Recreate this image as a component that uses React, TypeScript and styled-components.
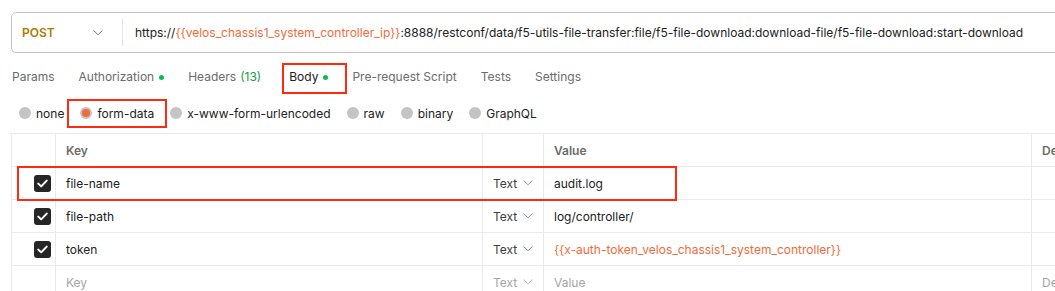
import React from "react";
import styled, { createGlobalStyle, css } from "styled-components";

const GlobalStyle = createGlobalStyle`
  html, body {
    margin: 0;
    background: #ffffff;
    overflow: hidden;
  }
  body {
    font-family: Inter, "Noto Sans", "Liberation Sans", sans-serif;
    font-size: 12px;
    color: #212121;
    -webkit-font-smoothing: antialiased;
  }
`;

const ORANGE = "#f26b3a";
const GREEN = "#0cbb52";
const MARK = "#ff2a10";

// Annotation frame drawn over a part of the UI
const marked = css`
  position: relative;
  &::after {
    content: "";
    position: absolute;
    border: 2px solid ${MARK};
    pointer-events: none;
  }
`;

const Page = styled.div`
  padding: 12px 0 0 11px;
  width: 1200px;
`;

const UrlBar = styled.div`
  display: flex;
  align-items: center;
  box-sizing: border-box;
  height: 41px;
  width: 1100px;
  border: 1px solid #c4c4c4;
  border-radius: 5px;
`;

const Method = styled.div`
  display: flex;
  align-items: center;
  justify-content: space-between;
  box-sizing: border-box;
  width: 110px;
  padding: 0 19px 0 10px;
  font-weight: 600;
  color: #ad7a03;
`;

const Divider = styled.div`
  width: 1px;
  height: 27px;
  background: #e3e3e3;
`;

const UrlText = styled.div`
  padding-left: 12px;
  white-space: nowrap;
  color: #212121;
`;

const Var = styled.span`
  color: ${ORANGE};
`;

const TabRow = styled.div`
  display: flex;
  gap: 24px;
  margin-top: 8px;
  padding-left: 1px;
`;

const Tab = styled.div<{ $active?: boolean; $marked?: boolean }>`
  display: flex;
  align-items: center;
  gap: 5px;
  padding: 8px 0 7px;
  line-height: 16px;
  border-bottom: 2px solid ${({ $active }) => ($active ? "#ff6c37" : "transparent")};
  color: ${({ $active }) => ($active ? "#212121" : "#6b6b6b")};
  ${({ $marked }) =>
    $marked &&
    css`
      ${marked}
      margin-left: 4px;
      &::after {
        left: -7px;
        right: -19px;
        top: 2px;
        bottom: -2px;
      }
    `}
`;

const Dot = styled.span`
  width: 5px;
  height: 5px;
  border-radius: 50%;
  background: ${GREEN};
`;

const Count = styled.span`
  color: #129b48;
  margin-left: -1px;
`;

const RadioRow = styled.div`
  display: flex;
  align-items: center;
  gap: 16px;
  margin-top: 8px;
  padding-left: 8px;
  height: 22px;
`;

const RadioOption = styled.label<{ $marked?: boolean }>`
  display: flex;
  align-items: center;
  gap: 5px;
  height: 22px;
  color: #212121;
  ${({ $marked }) =>
    $marked &&
    css`
      ${marked}
      &::after {
        left: -13px;
        right: -13px;
        top: -3px;
        bottom: -4px;
      }
    `}
`;

const RadioCircle = styled.span<{ $checked?: boolean }>`
  width: 12px;
  height: 12px;
  border-radius: 50%;
  background: #c4c4c4;
  display: flex;
  align-items: center;
  justify-content: center;
  &::before {
    content: "";
    display: ${({ $checked }) => ($checked ? "block" : "none")};
    width: 8px;
    height: 8px;
    border-radius: 50%;
    background: ${ORANGE};
  }
`;

const Table = styled.div`
  margin-top: 9px;
  border-top: 1px solid #ebebeb;
  border-left: 1px solid #ebebeb;
  width: 1150px;
`;

const Row = styled.div<{ $marked?: boolean }>`
  display: grid;
  grid-template-columns: 44px 427px 61px 488px 1fr;
  height: 33px;
  ${({ $marked }) =>
    $marked &&
    css`
      ${marked}
      &::after {
        left: 5px;
        width: 656px;
        top: -1px;
        height: 31px;
      }
    `}
`;

const Cell = styled.div<{ $tone?: "head" | "muted" | "var" }>`
  display: flex;
  align-items: center;
  box-sizing: border-box;
  border-right: 1px solid #ebebeb;
  border-bottom: 1px solid #ebebeb;
  padding-left: 10px;
  white-space: nowrap;
  overflow: hidden;
  color: ${({ $tone }) =>
    $tone === "head" ? "#6b6b6b" : $tone === "muted" ? "#a6a6a6" : $tone === "var" ? ORANGE : "#212121"};
  font-weight: ${({ $tone }) => ($tone === "head" ? 600 : 400)};
`;

const CheckCell = styled(Cell)`
  padding-left: 22px;
`;

const TypeCell = styled(Cell)`
  gap: 6px;
  color: ${({ $tone }) => ($tone === "muted" ? "#a6a6a6" : "#3d3d3d")};
`;

const ValueCell = styled(Cell)`
  padding-left: 10px;
`;

const Box = styled.span`
  width: 17px;
  height: 17px;
  border-radius: 3px;
  background: #262626;
  display: flex;
  align-items: center;
  justify-content: center;
`;

const Chevron = ({ color = "#8a8a8a" }: { color?: string }) => (
  <svg width="10" height="6" viewBox="0 0 10 6" fill="none">
    <path d="M1 0.8l4 4 4-4" stroke={color} strokeWidth="1" strokeLinecap="round" strokeLinejoin="round" />
  </svg>
);

const Check = () => (
  <Box>
    <svg width="11" height="9" viewBox="0 0 11 9" fill="none">
      <path d="M1.3 4.6l2.9 2.8L9.7 1.6" stroke="#fff" strokeWidth="2" strokeLinecap="round" strokeLinejoin="round" />
    </svg>
  </Box>
);

const rows = [
  { key: "file-name", value: "audit.log", marked: true },
  { key: "file-path", value: "log/controller/" },
  { key: "token", value: "{{x-auth-token_velos_chassis1_system_controller}}", isVar: true },
];

const radios = ["none", "form-data", "x-www-form-urlencoded", "raw", "binary", "GraphQL"];

export default function App() {
  return (
    <>
      <GlobalStyle />
      <Page>
        <UrlBar>
          <Method>
            POST
            <Chevron color="#6b6b6b" />
          </Method>
          <Divider />
          <UrlText>
            https://<Var>{"{{velos_chassis1_system_controller_ip}}"}</Var>
            :8888/restconf/data/f5-utils-file-transfer:file/f5-file-download:download-file/f5-file-download:start-download
          </UrlText>
        </UrlBar>

        <TabRow>
          <Tab>Params</Tab>
          <Tab>
            Authorization <Dot />
          </Tab>
          <Tab>
            Headers <Count>(13)</Count>
          </Tab>
          <Tab $active $marked>
            Body <Dot />
          </Tab>
          <Tab>Pre-request Script</Tab>
          <Tab>Tests</Tab>
          <Tab>Settings</Tab>
        </TabRow>

        <RadioRow>
          {radios.map((r) => (
            <RadioOption key={r} $marked={r === "form-data"}>
              <RadioCircle $checked={r === "form-data"} />
              {r}
            </RadioOption>
          ))}
        </RadioRow>

        <Table>
          <Row>
            <Cell />
            <Cell $tone="head">Key</Cell>
            <Cell />
            <Cell $tone="head">Value</Cell>
            <Cell $tone="head">Description</Cell>
          </Row>
          {rows.map((r) => (
            <Row key={r.key} $marked={r.marked}>
              <CheckCell>
                <Check />
              </CheckCell>
              <Cell>{r.key}</Cell>
              <TypeCell>
                Text <Chevron />
              </TypeCell>
              <ValueCell $tone={r.isVar ? "var" : undefined}>{r.value}</ValueCell>
              <Cell />
            </Row>
          ))}
          <Row>
            <Cell />
            <Cell $tone="muted">Key</Cell>
            <TypeCell $tone="muted">
              Text <Chevron color="#b5b5b5" />
            </TypeCell>
            <ValueCell $tone="muted">Value</ValueCell>
            <Cell $tone="muted">Description</Cell>
          </Row>
        </Table>
      </Page>
    </>
  );
}
